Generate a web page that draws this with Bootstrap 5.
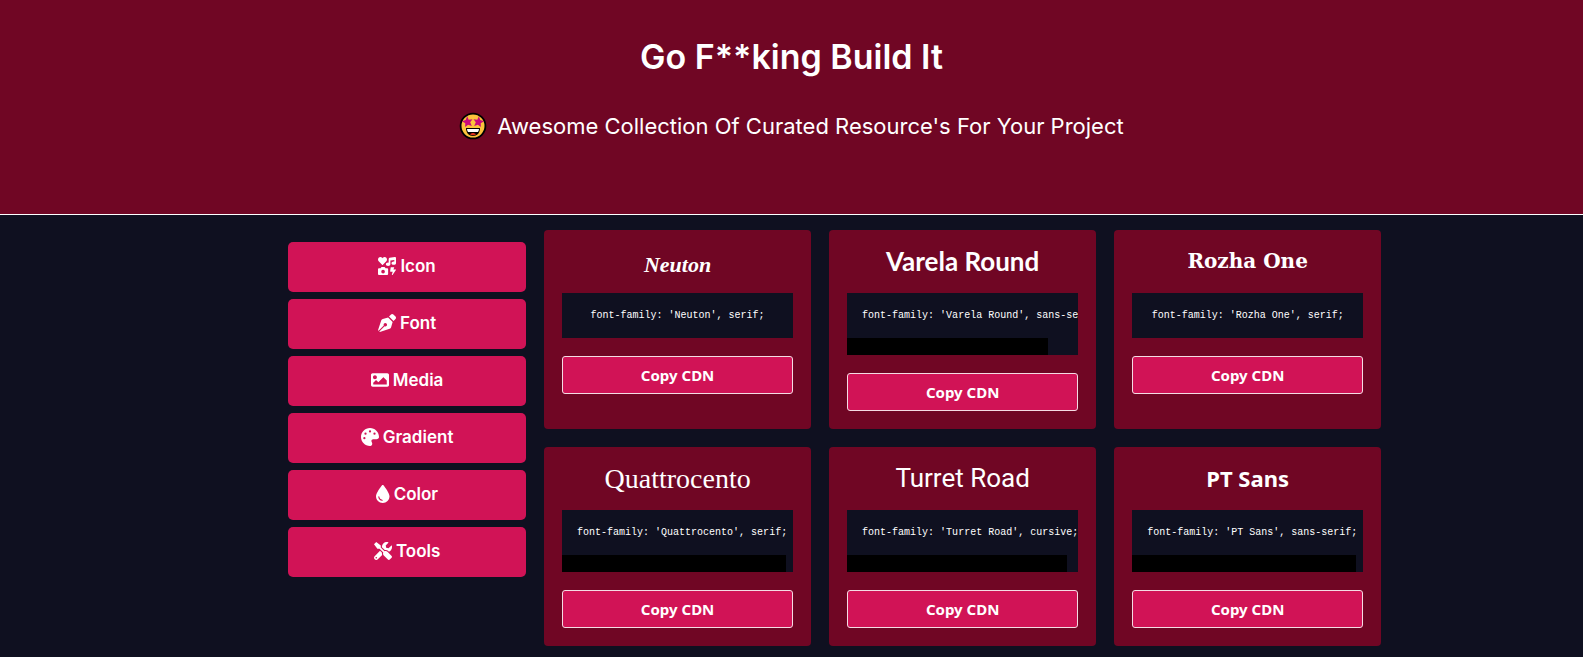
<!DOCTYPE html>
<html lang="en">
<head>
<meta charset="utf-8">
<meta name="viewport" content="width=device-width, initial-scale=1">
<title>Go F**king Build It</title>
<link href="https://cdn.jsdelivr.net/npm/bootstrap@5.3.0/dist/css/bootstrap.min.css" rel="stylesheet">
<style>
  :root { --night: #0f1020; --wine: #700624; --rose: #d11356; }
  body { background: var(--night); color: #fff; font-family: Inter, sans-serif; }
  .hero { background: var(--wine); padding: 36px 16px 72px; }
  .hero h1 { font-size: 34px; line-height: 42px; margin-bottom: 32px; }
  .hero p { font-size: 22px; line-height: 32px; gap: 10px; }
  .layout { display: grid; grid-template-columns: 238px 1fr; gap: 18px; padding: 15px 12.75% 0 18.2%; }
  .side { gap: 7px; padding-top: 12px; }
  .side .btn { height: 50px; gap: 4px; font-size: 17px; border-radius: 5px; }
  .btn-rose { --bs-btn-bg: var(--rose); --bs-btn-color: #fff; --bs-btn-hover-bg: #b50f49; --bs-btn-hover-color: #fff; --bs-btn-active-bg: #b50f49; --bs-btn-active-color: #fff; }
  .side svg { height: 18px; fill: currentColor; margin-bottom: 2px; }
  .fonts { display: grid; grid-template-columns: repeat(3, minmax(0, 1fr)); gap: 18px; }
  .tile { background: var(--wine); border-radius: 4px; padding: 18px; }
  .tile h2 { height: 27px; line-height: 27px; margin-bottom: 18px; white-space: nowrap; }
  .snippet { background: var(--night); margin-bottom: 18px; }
  .snippet pre { font: 10px/15px "Liberation Mono", monospace; padding: 15px 0 15px 15px; }
  .snippet.fits pre { padding-left: 0; text-align: center; }
  .thumb { height: 17px; background: #000; }
  .copy { --bs-btn-border-color: #f5dce4; --bs-btn-hover-border-color: #fff; height: 38px; padding: 0; border-radius: 3px; font: 700 15px/22px "Noto Sans", sans-serif; }
  .f-neuton { font: italic 700 22px "Liberation Serif", serif; padding-top: 3px; }
  .f-varela { font: 700 26px Lato, sans-serif; }
  .f-rozha { font: 700 20px "DejaVu Serif", serif; }
  .f-quattro { font: 400 28px "Liberation Serif", serif; }
  .f-turret { font: 400 26px Roboto, sans-serif; }
  .f-pt { font: 700 22px "Noto Sans", sans-serif; }
  @media (max-width: 1100px) {
    .layout { grid-template-columns: 1fr; padding: 15px; }
    .fonts { grid-template-columns: repeat(auto-fill, minmax(240px, 1fr)); }
  }
</style>
</head>
<body>
<header class="hero border-bottom border-white text-center">
  <h1 class="fw-semibold">Go F**king Build It</h1>
  <p class="d-flex justify-content-center align-items-center mb-0">
    <svg width="28" height="28" viewBox="0 0 28 28" aria-hidden="true">
      <circle cx="14" cy="14" r="12.4" fill="#fcc23c" stroke="#000" stroke-width="1.8"/>
      <path d="M8.2 4.200l1.500 3.500 3.800-.4-2.300 3 1.600 3.600-3.700-1.200-3 2.400.2-3.900-3.400-2 3.800-1.200z" fill="#c80a7c"/>
      <path d="M19.800 4.200l-1.500 3.500-3.800-.4 2.300 3-1.600 3.600 3.700-1.200 3 2.400-.2-3.900 3.400-2-3.800-1.200z" fill="#c80a7c"/>
      <path d="M7 16h14c0 5-3 8-7 8s-7-3-7-8z" fill="#000"/>
      <path d="M8 17h12c0 1-.3 2-1 3H9c-.7-1-1-2-1-3z" fill="#fff"/>
      <path d="M11 22.500c1-2 5-2 6 0-2 1-4 1-6 0z" fill="#e0301e"/>
    </svg>
    <span>Awesome Collection Of Curated Resource's For Your Project</span>
  </p>
</header>
<main class="layout">
  <nav class="side d-flex flex-column">
    <button type="button" class="btn btn-rose fw-semibold border-0 d-flex justify-content-center align-items-center"><svg viewBox="0 0 512 512" aria-hidden="true"><path d="M116.650 219.350a15.680 15.680 0 0 0 22.650 0l96.750-99.830c28.150-29 26.500-77.100-4.910-103.880C203.750-7.700 163-3.500 137.860 22.440L128 32.580l-9.850-10.140C93.050-3.500 52.250-7.700 24.860 15.640c-31.410 26.780-33 74.850-5 103.880zm143.920 100.490h-48l-7.080-14.240a27.390 27.390 0 0 0-25.660-17.780h-71.710a27.390 27.390 0 0 0-25.660 17.780l-7 14.240h-48A27.450 27.450 0 0 0 0 347.300v137.250A27.440 27.440 0 0 0 27.430 512h233.140A27.450 27.450 0 0 0 288 484.550V347.300a27.450 27.450 0 0 0-27.430-27.460zM144 468a52 52 0 1 1 52-52 52 52 0 0 1-52 52zm355.400-115.900h-60.580l22.360-50.750c2.100-6.650-3.930-13.210-12.180-13.210h-75.590c-6.300 0-11.660 3.900-12.500 9.100l-16.800 106.930c-1 6.300 4.880 11.890 12.500 11.890h62.310l-24.200 83c-1.890 6.650 4.200 12.900 12.230 12.900a13.260 13.260 0 0 0 10.920-5.250l92.400-138.910c4.880-6.910-1.160-15.700-10.870-15.700zM478.080.33L329.510 23.170C314.870 25.420 304 38.920 304 54.830V161.600a83.250 83.250 0 0 0-16-1.700c-35.350 0-64 21.480-64 48s28.650 48 64 48c35.200 0 63.730-21.320 64-47.660V99.660l112-17.220v47.180a83.250 83.250 0 0 0-16-1.700c-35.350 0-64 21.480-64 48s28.650 48 64 48c35.200 0 63.730-21.320 64-47.660V32c0-19.480-16-34.420-33.920-31.670z"/></svg>Icon</button>
    <button type="button" class="btn btn-rose fw-semibold border-0 d-flex justify-content-center align-items-center"><svg viewBox="0 0 512 512" aria-hidden="true"><path d="M136.600 138.790a64 64 0 0 0-43.310 41.350L0 460l14.690 14.690L164.800 324.580c-2.990-6.260-4.800-13.180-4.800-20.580 0-26.510 21.490-48 48-48s48 21.490 48 48-21.490 48-48 48c-7.400 0-14.320-1.810-20.580-4.800L37.310 497.310 52 512l279.860-93.290a64 64 0 0 0 41.350-43.310L416 224 288 96zm361.340-64.620l-60.110-60.110c-18.750-18.750-49.160-18.750-67.910 0l-56.550 56.550 128.020 128.020 56.550-56.550c18.750-18.750 18.750-49.150 0-67.910z"/></svg>Font</button>
    <button type="button" class="btn btn-rose fw-semibold border-0 d-flex justify-content-center align-items-center"><svg viewBox="0 0 512 512" aria-hidden="true"><path d="M464 448H48c-26.510 0-48-21.490-48-48V112c0-26.510 21.490-48 48-48h416c26.510 0 48 21.490 48 48v288c0 26.510-21.490 48-48 48zM112 120c-30.930 0-56 25.070-56 56s25.070 56 56 56 56-25.070 56-56-25.070-56-56-56zM64 384h384V272l-87.510-87.510c-4.690-4.690-12.290-4.690-16.980 0L208 320l-55.510-55.510c-4.690-4.690-12.290-4.690-16.980 0L64 336z"/></svg>Media</button>
    <button type="button" class="btn btn-rose fw-semibold border-0 d-flex justify-content-center align-items-center"><svg viewBox="0 0 512 512" aria-hidden="true"><path d="M512 256c0 .9 0 1.800 0 2.700c-.4 36.500-33.600 61.300-70.100 61.300H344c-26.500 0-48 21.500-48 48c0 3.400 .4 6.700 1 9.900c2.100 10.200 6.500 20 10.800 29.900c6.100 13.800 12.100 27.500 12.100 42c0 31.800-21.600 60.700-53.400 62c-3.500 .1-7 .2-10.600 .2C114.600 512 0 397.400 0 256S114.600 0 256 0S512 114.600 512 256zM128 288a32 32 0 1 0 -64 0 32 32 0 1 0 64 0zm0-96a32 32 0 1 0 0-64 32 32 0 1 0 0 64zM288 96a32 32 0 1 0 -64 0 32 32 0 1 0 64 0zm96 96a32 32 0 1 0 0-64 32 32 0 1 0 0 64z"/></svg>Gradient</button>
    <button type="button" class="btn btn-rose fw-semibold border-0 d-flex justify-content-center align-items-center"><svg viewBox="0 0 384 512" aria-hidden="true"><path d="M192 512C86 512 0 426 0 320C0 228.800 130.200 57.700 166.600 11.700C172.600 4.200 181.500 0 191.100 0h1.800c9.600 0 18.500 4.200 24.500 11.700C253.800 57.700 384 228.800 384 320c0 106-86 192-192 192zM96 336c0-8.800-7.200-16-16-16s-16 7.200-16 16c0 61.900 50.100 112 112 112c8.800 0 16-7.200 16-16s-7.200-16-16-16c-44.200 0-80-35.800-80-80z"/></svg>Color</button>
    <button type="button" class="btn btn-rose fw-semibold border-0 d-flex justify-content-center align-items-center"><svg viewBox="0 0 512 512" aria-hidden="true"><path d="M501.100 395.700L384 278.600c-23.100-23.100-57.600-27.600-85.400-13.900L192 158.100V96L64 0 0 64l96 128h62.100l106.600 106.600c-13.600 27.800-9.200 62.300 13.900 85.400l117.100 117.100c14.600 14.600 38.200 14.600 52.700 0l52.700-52.700c14.500-14.600 14.500-38.200 0-52.700zM331.700 225c28.300 0 54.900 11 74.900 31l19.400 19.400c15.800-6.900 30.800-16.500 43.800-29.500 37.100-37.100 49.700-89.300 37.900-136.700-2.200-9-13.500-12.100-20.100-5.500l-74.400 74.400-67.900-11.300L334 98.900l74.400-74.400c6.600-6.600 3.400-17.900-5.700-20.200-47.400-11.700-99.600.9-136.600 37.900-28.500 28.500-41.900 66.100-41.200 103.600l82.100 82.100c8.100-1.900 16.500-2.900 24.700-2.900zm-103.900 82l-56.700-56.700L18.700 402.800c-25 25-25 65.500 0 90.500s65.500 25 90.500 0l123.600-123.600c-7.600-19.900-9.900-41.600-5-62.700zM64 472c-13.200 0-24-10.800-24-24 0-13.300 10.700-24 24-24s24 10.700 24 24c0 13.200-10.700 24-24 24z"/></svg>Tools</button>
  </nav>
  <section class="fonts text-center">
    <article class="tile">
      <h2 class="f-neuton">Neuton</h2>
      <div class="snippet fits"><pre class="m-0 overflow-hidden">font-family: 'Neuton', serif;</pre></div>
      <button type="button" class="btn btn-rose copy w-100">Copy CDN</button>
    </article>
    <article class="tile">
      <h2 class="f-varela">Varela Round</h2>
      <div class="snippet text-start"><pre class="m-0 overflow-hidden">font-family: 'Varela Round', sans-serif;</pre><div class="thumb" style="width: 87%"></div></div>
      <button type="button" class="btn btn-rose copy w-100">Copy CDN</button>
    </article>
    <article class="tile">
      <h2 class="f-rozha">Rozha One</h2>
      <div class="snippet fits"><pre class="m-0 overflow-hidden">font-family: 'Rozha One', serif;</pre></div>
      <button type="button" class="btn btn-rose copy w-100">Copy CDN</button>
    </article>
    <article class="tile">
      <h2 class="f-quattro">Quattrocento</h2>
      <div class="snippet text-start"><pre class="m-0 overflow-hidden">font-family: 'Quattrocento', serif;</pre><div class="thumb" style="width: 97%"></div></div>
      <button type="button" class="btn btn-rose copy w-100">Copy CDN</button>
    </article>
    <article class="tile">
      <h2 class="f-turret">Turret Road</h2>
      <div class="snippet text-start"><pre class="m-0 overflow-hidden">font-family: 'Turret Road', cursive;</pre><div class="thumb" style="width: 95%"></div></div>
      <button type="button" class="btn btn-rose copy w-100">Copy CDN</button>
    </article>
    <article class="tile">
      <h2 class="f-pt">PT Sans</h2>
      <div class="snippet text-start"><pre class="m-0 overflow-hidden">font-family: 'PT Sans', sans-serif;</pre><div class="thumb" style="width: 97%"></div></div>
      <button type="button" class="btn btn-rose copy w-100">Copy CDN</button>
    </article>
  </section>
</main>
<script src="https://cdn.jsdelivr.net/npm/bootstrap@5.3.0/dist/js/bootstrap.bundle.min.js"></script>
</body>
</html>
